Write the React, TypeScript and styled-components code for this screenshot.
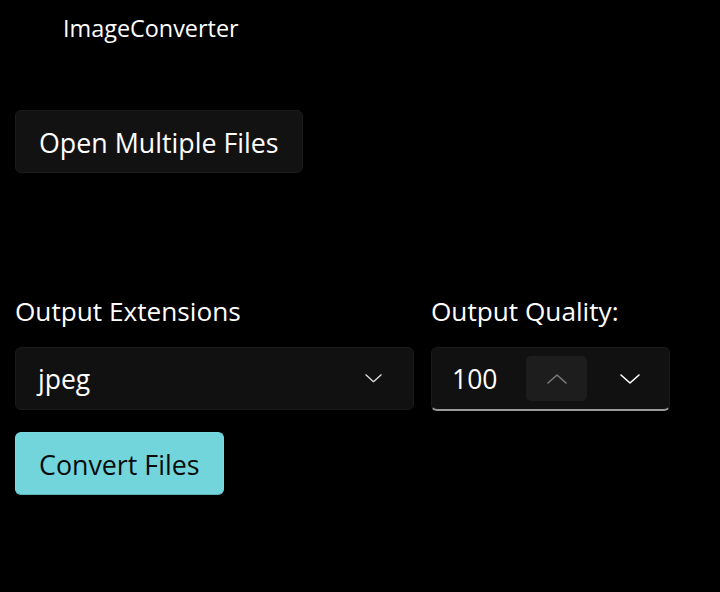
import React, { useState } from 'react';
import styled, { createGlobalStyle } from 'styled-components';

const GlobalStyle = createGlobalStyle`
  html, body {
    margin: 0;
    padding: 0;
    background: #000;
    color: #fff;
    font-family: 'Open Sans', 'Noto Sans', sans-serif;
  }
`;

const Window = styled.div`
  width: 720px;
  height: 592px;
  background: #000;
  overflow: hidden;
`;

const TitleBar = styled.div`
  height: 56px;
  padding-left: 63px;
  display: flex;
  align-items: center;
  font-size: 23.4px;
  color: #fff;
`;

const Content = styled.div`
  padding: 54px 15px 0 15px;
  display: flex;
  flex-direction: column;
  align-items: flex-start;
`;

const Button = styled.button<{ $accent?: boolean }>`
  height: 63px;
  padding: 2px 23px 0 23px;
  border-radius: 6px;
  font-family: inherit;
  font-size: 26.8px;
  cursor: pointer;
  background: ${(p) => (p.$accent ? '#72d5dc' : '#121212')};
  color: ${(p) => (p.$accent ? '#0b0b0b' : '#fff')};
  border: 1px solid ${(p) => (p.$accent ? '#7ad9df' : '#1b1b1b')};
  border-bottom-color: ${(p) => (p.$accent ? '#5fb3b8' : '#1b1b1b')};
`;

const OptionsRow = styled.div`
  display: flex;
  gap: 17px;
  margin-top: 120px;
  margin-bottom: 21px;
`;

const Field = styled.div<{ $width: number }>`
  width: ${(p) => p.$width}px;
  display: flex;
  flex-direction: column;
  gap: 18px;
`;

const Label = styled.div`
  font-size: 26.2px;
  line-height: 36px;
`;

const ComboBox = styled.div`
  height: 63px;
  box-sizing: border-box;
  border-radius: 6px;
  background: #111;
  border: 1px solid #1a1a1a;
  display: flex;
  align-items: center;
  justify-content: space-between;
  padding: 0 31px 0 22px;
  font-size: 26.5px;
`;

const NumberBox = styled.div`
  height: 64px;
  box-sizing: border-box;
  border-radius: 6px;
  background: #111;
  border: 1px solid #1a1a1a;
  border-bottom: 2px solid #9a9a9a;
  display: flex;
  align-items: center;
  padding: 0 9px 0 20px;
  font-size: 26.5px;
`;

const NumberValue = styled.span`
  flex: 1;
`;

const SpinButton = styled.div<{ $active?: boolean }>`
  width: 61px;
  height: 45px;
  border-radius: 5px;
  display: flex;
  align-items: center;
  justify-content: center;
  background: ${(p) => (p.$active ? '#1d1d1d' : 'transparent')};
  color: ${(p) => (p.$active ? '#7a7a7a' : '#fff')};
  & + & {
    margin-left: 12px;
  }
`;

const Chevron = ({ up, color, size = 20 }: { up?: boolean; color?: string; size?: number }) => (
  <svg width={size} height={size / 2} viewBox="0 0 20 10" fill="none">
    <path
      d={up ? 'M1 9 L10 1 L19 9' : 'M1 1 L10 9 L19 1'}
      stroke={color || 'currentColor'}
      strokeWidth="1.6"
      strokeLinecap="round"
      strokeLinejoin="round"
    />
  </svg>
);

const App = () => {
  const [quality] = useState(100);

  return (
    <>
      <GlobalStyle />
      <Window>
        <TitleBar>ImageConverter</TitleBar>
        <Content>
          <Button>Open Multiple Files</Button>
          <OptionsRow>
            <Field $width={399}>
              <Label>Output Extensions</Label>
              <ComboBox>
                <span>jpeg</span>
                <Chevron color="#dcdcdc" size={17} />
              </ComboBox>
            </Field>
            <Field $width={239}>
              <Label>Output Quality:</Label>
              <NumberBox>
                <NumberValue>{quality}</NumberValue>
                <SpinButton $active>
                  <Chevron up />
                </SpinButton>
                <SpinButton>
                  <Chevron />
                </SpinButton>
              </NumberBox>
            </Field>
          </OptionsRow>
          <Button $accent>Convert Files</Button>
        </Content>
      </Window>
    </>
  );
};

export default App;
